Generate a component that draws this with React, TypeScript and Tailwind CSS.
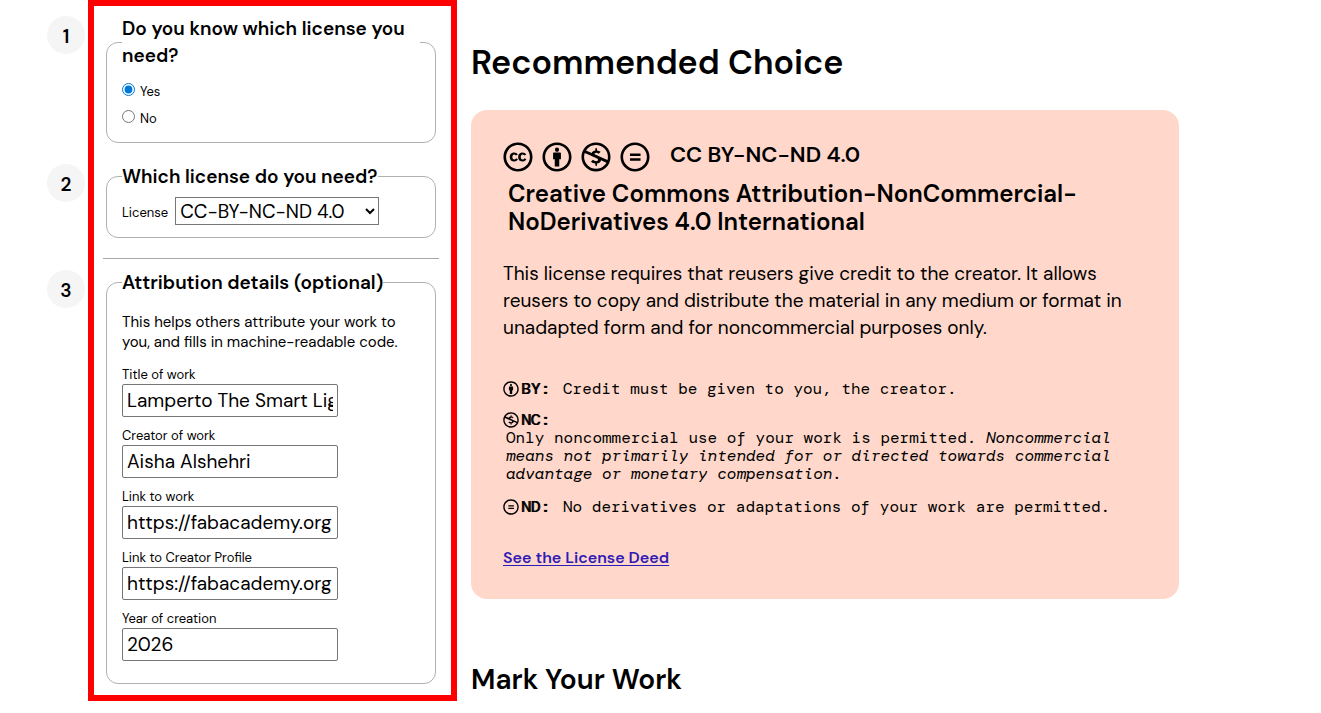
import React, { useState } from 'react';
import type { ReactNode } from 'react';
import {
  FaCreativeCommons,
  FaCreativeCommonsBy,
  FaCreativeCommonsNc,
  FaCreativeCommonsNd,
} from 'react-icons/fa6';

function Step({ number, legend, children }: { number: number; legend: string; children: ReactNode }) {
  return (
    <div className="flex items-start gap-[21px]">
      <span
        aria-hidden="true"
        className="mt-px flex size-[38px] shrink-0 items-center justify-center rounded-full bg-[#f5f5f5] pt-1 text-[19px] font-semibold"
      >
        {number}
      </span>
      <fieldset className="min-w-0 flex-1 rounded-[12px] border border-[#b0b0b0] px-[15px]">
        <legend className="text-[19px] leading-[27px] font-semibold">{legend}</legend>
        {children}
      </fieldset>
    </div>
  );
}

const FIELDS = [
  { id: 'title', label: 'Title of work', value: 'Lamperto The Smart Light' },
  { id: 'creator', label: 'Creator of work', value: 'Aisha Alshehri' },
  { id: 'link', label: 'Link to work', value: 'https://fabacademy.org' },
  { id: 'profile', label: 'Link to Creator Profile', value: 'https://fabacademy.org' },
  { id: 'year', label: 'Year of creation', value: '2026' },
];

const LICENSES = ['CC-BY-NC-ND 4.0', 'CC-BY 4.0', 'CC-BY-SA 4.0', 'CC-BY-NC 4.0', 'CC-BY-ND 4.0'];

function ChooserForm() {
  const [known, setKnown] = useState('Yes');
  return (
    <form className="relative w-[457px] shrink-0 pt-[15px] pr-[21px] pb-[17px] pl-[47px]">
      <Step number={1} legend="Do you know which license you need?">
        <div className="pt-[9px] pb-[10px]">
          {['Yes', 'No'].map((option) => (
            <label key={option} className="flex h-[27px] items-center gap-[5px] text-[13px]">
              <input
                type="radio"
                name="known"
                checked={known === option}
                onChange={() => setKnown(option)}
                className="mb-1 size-[13px] accent-[#0078d7]"
              />
              {option}
            </label>
          ))}
        </div>
      </Step>

      <div className="mt-5">
        <Step number={2} legend="Which license do you need?">
          <div className="flex items-center gap-[7px] pt-[7px] pb-3">
            <label htmlFor="license" className="pt-1 text-[13px]">
              License
            </label>
            <select
              id="license"
              className="h-7 w-[204px] border border-[#767676] bg-white text-[19px] leading-6"
            >
              {LICENSES.map((name) => (
                <option key={name}>{name}</option>
              ))}
            </select>
          </div>
        </Step>
      </div>

      <hr className="-mr-[3px] mt-5 mb-[10px] ml-[56px] border-[#a8a8a8]" />

      <Step number={3} legend="Attribution details (optional)">
        <p className="pt-4 pb-[14px] text-[15px] leading-5">
          This helps others attribute your work to you, and fills in machine-readable code.
        </p>
        <div className="flex flex-col gap-[10px] pb-[22px]">
          {FIELDS.map((field) => (
            <div key={field.id} className="flex flex-col">
              <label htmlFor={field.id} className="text-[13px] leading-[18px]">
                {field.label}
              </label>
              <input
                id={field.id}
                type="text"
                defaultValue={field.value}
                className="h-[33px] w-[216px] rounded-[2px] border border-[#767676] px-1 text-[19px]"
              />
            </div>
          ))}
        </div>
      </Step>

      <div className="pointer-events-none absolute inset-y-0 right-0 left-[88px] border-[6px] border-[#ff0000]" />
    </form>
  );
}

function Term({ icon, code, children }: { icon: ReactNode; code: string; children: ReactNode }) {
  return (
    <div className="flex items-center leading-[19px]">
      <dt className="flex w-[60px] items-center gap-[2px] [text-shadow:1px_0_currentColor]">
        {icon}
        {code}:
      </dt>
      <dd>{children}</dd>
    </div>
  );
}

export default function App() {
  return (
    <div className="flex items-start gap-[14px] overflow-hidden bg-white font-['DM_Sans','Inter',sans-serif] text-black">
      <ChooserForm />

      <main className="max-w-[708px] flex-1 pt-[42px]">
        <h1 className="text-[34px] leading-[42px] font-semibold">Recommended Choice</h1>

        <section className="mt-[26px] rounded-2xl bg-[#ffd8cb] px-8 pt-[31px] pb-[29px]">
          <div className="flex gap-5">
            <div className="flex gap-[9px] pt-px text-[30px]">
              <FaCreativeCommons />
              <FaCreativeCommonsBy />
              <FaCreativeCommonsNc />
              <FaCreativeCommonsNd />
            </div>
            <h2 className="text-[22px] leading-7 font-semibold">CC BY-NC-ND 4.0</h2>
          </div>
          <h3 className="mt-2 ml-[5px] text-[24px] leading-7 font-semibold">
            Creative Commons Attribution-NonCommercial-NoDerivatives 4.0 International
          </h3>
          <p className="mt-6 text-[19px] leading-[27px]">
            This license requires that reusers give credit to the creator. It allows reusers to copy and
            distribute the material in any medium or format in unadapted form and for noncommercial
            purposes only.
          </p>

          <dl className="mt-[38px] flex flex-col gap-3 font-['DM_Mono','Liberation_Mono',monospace] text-[16px]">
            <Term icon={<FaCreativeCommonsBy />} code="BY">
              Credit must be given to you, the creator.
            </Term>
            <div className="leading-[19px]">
              <dt className="flex items-center gap-[2px] [text-shadow:1px_0_currentColor]">
                <FaCreativeCommonsNc />
                NC:
              </dt>
              <dd className="ml-[3px] pb-[2px] leading-[18px]">
                Only noncommercial use of your work is permitted.{' '}
                <i>
                  Noncommercial means not primarily intended for or directed towards commercial advantage
                  or monetary compensation.
                </i>
              </dd>
            </div>
            <Term icon={<FaCreativeCommonsNd />} code="ND">
              No derivatives or adaptations of your work are permitted.
            </Term>
          </dl>

          <a
            href="#deed"
            className="mt-[31px] inline-block text-[16px] leading-[22px] font-semibold text-[#2f1bb5] underline underline-offset-2"
          >
            See the License Deed
          </a>
        </section>

        <h2 className="mt-16 text-[28px] leading-[34px] font-semibold">Mark Your Work</h2>
      </main>
    </div>
  );
}
